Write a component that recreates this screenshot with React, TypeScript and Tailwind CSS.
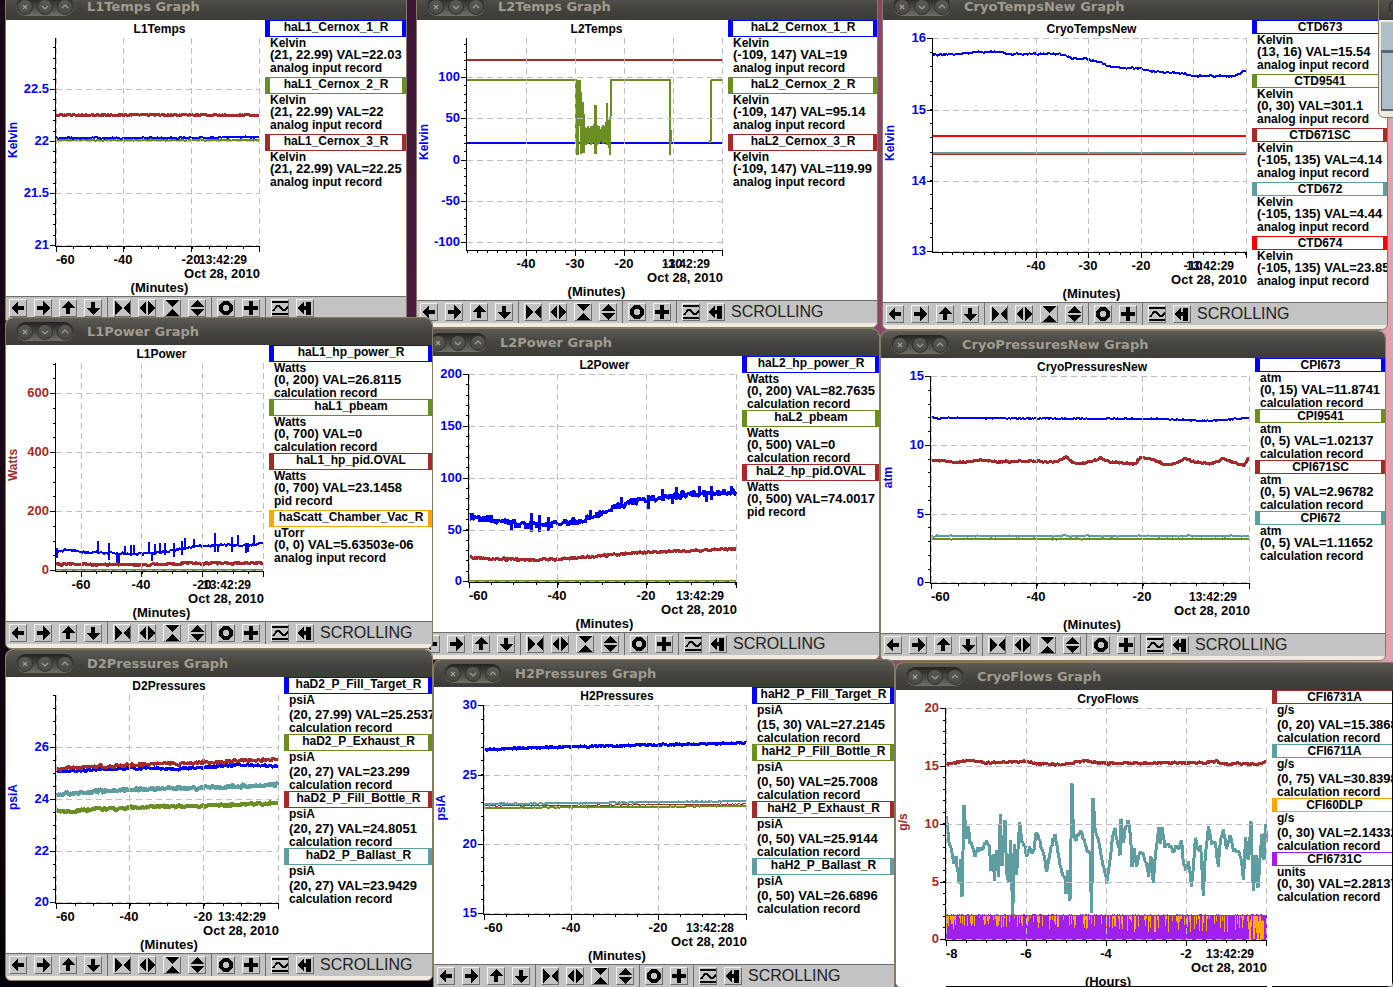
import React from "react";

const BLUE = "#0000ff";
const OLIVE = "#6b8e23";
const BROWN = "#a52a2a";
const TEAL = "#5f9ea0";
const ORANGE = "#ffa500";
const PURPLE = "#a020f0";
const RED = "#ff0000";

const CHART_FONT = "font-['Liberation_Sans',Arial,sans-serif]";

type Pt = [number, number];
type Spike = [number, number, number];
type Series = {
  color: string;
  points: Pt[];
  noise?: number;
  spikes?: Spike[];
  width?: number;
};
type Entry = { name: string; color: string; unit: string; value: string; record: string };
type Plot = {
  x0: number;
  x1: number;
  y0: number;
  y1: number;
  yColor: string;
  yTitle: string;
  xTitle: string;
  y: [string, number][];
  yMinor: number;
  x: [string, number][];
  xMinor: number;
  time: string;
};
type GraphWindow = {
  title: string;
  frame: string;
  origin: Pt;
  size: [number, number];
  plot: Plot;
  series: Series[];
  legend: Entry[];
  status?: boolean;
  cut?: boolean;
};

function random(seed: number) {
  let s = seed;
  return () => {
    s = (s * 16807) % 2147483647;
    return s / 2147483647;
  };
}

function trace({ points, noise = 0, spikes = [] }: Series, seed: number) {
  if (!noise) return points.map((p) => p.join(",")).join(" ");
  const rnd = random(seed);
  const out: string[] = [];
  for (let i = 0; i < points.length - 1; i++) {
    const [ax, ay] = points[i];
    const [bx, by] = points[i + 1];
    for (let x = ax; x < bx; x += 1) {
      const y = ay + ((by - ay) * (x - ax)) / (bx - ax);
      const r = rnd() - 0.5;
      out.push(`${x},${(y + r * noise * 2 * (Math.abs(r) + 0.5)).toFixed(1)}`);
      const spike = spikes.find((s) => s[0] >= x && s[0] < x + 1);
      if (spike) out.push(`${x},${spike[1]}`, `${x},${spike[2]}`, `${x},${y.toFixed(1)}`);
    }
  }
  out.push(points[points.length - 1].join(","));
  return out.join(" ");
}

function steps(from: number, to: number, start: number, step: number) {
  const out: number[] = [];
  for (let v = start; v >= from; v -= step) out.push(v);
  for (let v = start + step; v <= to; v += step) out.push(v);
  return out;
}

const FLOW: Pt[] = ([
  [168, 490], [172, 510], [176, 560], [185, 590], [192, 625], [198, 610], [205, 660], [208, 690], [212, 620],
  [216, 730], [222, 455], [228, 545], [235, 515], [240, 560], [250, 580], [255, 605], [262, 580], [275, 585],
  [290, 560], [298, 575], [303, 640], [310, 600], [313, 675], [320, 580], [325, 665], [331, 470], [336, 635],
  [345, 500], [350, 650], [355, 680], [362, 560], [368, 778], [374, 570], [380, 660], [389, 495], [395, 560],
  [405, 580], [410, 605], [418, 575], [425, 600], [432, 585], [438, 535], [447, 550], [455, 580], [465, 610],
  [470, 650], [480, 590], [490, 550], [495, 535], [500, 570], [510, 630], [518, 655], [525, 670], [528, 715],
  [534, 640], [540, 733], [546, 380], [550, 530], [558, 555], [565, 540], [573, 525], [580, 550], [590, 580],
  [600, 600], [605, 780], [609, 425], [615, 520], [625, 550], [635, 610], [645, 650], [650, 685], [656, 650],
  [662, 600], [667, 545], [675, 520], [680, 550], [690, 600], [693, 490], [700, 570], [706, 520], [714, 495],
  [722, 540], [726, 640], [732, 580], [740, 630], [748, 590], [760, 600], [770, 630], [776, 660], [783, 600],
  [790, 680], [797, 590], [806, 520], [812, 560], [816, 520], [825, 570], [835, 570], [848, 590], [858, 575],
  [866, 580], [875, 560], [880, 620], [888, 645], [895, 620], [904, 690], [910, 640], [916, 550], [925, 590],
  [932, 570], [940, 720], [946, 600], [956, 515], [965, 570], [975, 560], [985, 630], [992, 550], [1000, 520],
  [1010, 580], [1020, 540], [1030, 585], [1045, 590], [1055, 620], [1060, 680], [1067, 550], [1075, 620],
  [1083, 505], [1090, 710], [1098, 600], [1104, 700], [1110, 610], [1116, 540], [1122, 620], [1126, 500],
  [1130, 560],
] as Pt[]).map(([x, y]) => [890 + x / 3, 655 + y / 3] as Pt);

function coolingDips(): Pt[] {
  const rnd = random(77);
  const out: Pt[] = [[467, 80], [576, 80], [576, 143], [577, 80], [577, 155], [578, 80], [578, 155], [579, 80], [580, 126], [580, 80]];
  for (let x = 581; x < 585; x++) out.push([x, 102 + rnd() * 20], [x, 155 - rnd() * 6]);
  for (let x = 585; x < 608; x++) {
    const top = x === 595 || x === 596 ? 105 : x === 607 ? 103 : 125 + rnd() * 6;
    out.push([x, top], [x, x === 595 || x === 596 ? 154 : 141 + rnd() * 4]);
  }
  out.push([608, 120], [609, 140], [610, 155], [611, 80], [670, 80], [670, 155], [671, 130], [671, 143]);
  return out;
}

const flat = (a: number, b: number, y: number): Pt[] => [[a, y], [b, y]];

const analog = "analog input record";
const calc = "calculation record";

const WINDOWS: GraphWindow[] = [
  {
    title: "CryoTempsNew",
    frame: "left-[882px] top-[-8px] w-[506px]",
    origin: [883, 20],
    size: [369, 282],
    status: true,
    plot: {
      x0: 933, x1: 1246, y0: 38, y1: 252, yColor: BLUE, yTitle: "Kelvin", xTitle: "(Minutes)",
      y: [["16", 38], ["15", 110], ["14", 181], ["13", 251]], yMinor: 14.2,
      x: [["-40", 1036], ["-30", 1088], ["-20", 1141], ["-10", 1193]], xMinor: 10.45, time: "13:42:29",
    },
    series: [
      { color: BROWN, points: flat(933, 1246, 154), width: 2 },
      { color: TEAL, points: flat(933, 1246, 153), width: 2 },
      { color: RED, points: flat(933, 1246, 136), width: 2 },
      {
        color: BLUE, noise: 1, width: 2,
        points: [[933, 55], [960, 54], [975, 52], [1000, 52], [1010, 54], [1060, 54], [1072, 58], [1085, 59], [1100, 62], [1108, 66], [1125, 68], [1140, 68], [1155, 72], [1180, 73], [1192, 76], [1235, 76], [1241, 73], [1246, 70]],
      },
    ],
    legend: [
      { name: "CTD673", color: BLUE, unit: "Kelvin", value: "(13, 16) VAL=15.54", record: analog },
      { name: "CTD9541", color: OLIVE, unit: "Kelvin", value: "(0, 30) VAL=301.1", record: analog },
      { name: "CTD671SC", color: BROWN, unit: "Kelvin", value: "(-105, 135) VAL=4.14", record: analog },
      { name: "CTD672", color: TEAL, unit: "Kelvin", value: "(-105, 135) VAL=4.44", record: analog },
      { name: "CTD674", color: RED, unit: "Kelvin", value: "(-105, 135) VAL=23.85", record: analog },
    ],
  },
  {
    title: "L2Temps",
    frame: "left-[416px] top-[-8px] w-[462px]",
    origin: [417, 20],
    size: [311, 280],
    status: true,
    plot: {
      x0: 467, x1: 722, y0: 38, y1: 250, yColor: BLUE, yTitle: "Kelvin", xTitle: "(Minutes)",
      y: [["100", 77], ["50", 118], ["0", 160], ["-50", 201], ["-100", 242]], yMinor: 8.27,
      x: [["-40", 526], ["-30", 575], ["-20", 624], ["-10", 673]], xMinor: 9.8, time: "13:42:29",
    },
    series: [
      { color: BROWN, points: flat(467, 722, 60), width: 2 },
      { color: BLUE, points: flat(467, 722, 143), width: 2 },
      { color: OLIVE, points: coolingDips(), width: 2 },
      { color: OLIVE, points: [[710, 143], [711, 138], [711, 80], [722, 80]], width: 2 },
    ],
    legend: [
      { name: "haL2_Cernox_1_R", color: BLUE, unit: "Kelvin", value: "(-109, 147) VAL=19", record: analog },
      { name: "haL2_Cernox_2_R", color: OLIVE, unit: "Kelvin", value: "(-109, 147) VAL=95.14", record: analog },
      { name: "haL2_Cernox_3_R", color: BROWN, unit: "Kelvin", value: "(-109, 147) VAL=119.99", record: analog },
    ],
  },
  {
    title: "L1Temps",
    frame: "left-[5px] top-[-8px] w-[402px]",
    origin: [6, 20],
    size: [259, 276],
    plot: {
      x0: 56, x1: 259, y0: 38, y1: 246, yColor: BLUE, yTitle: "Kelvin", xTitle: "(Minutes)",
      y: [["22.5", 89], ["22", 141], ["21.5", 193], ["21", 245]], yMinor: 10.4,
      x: [["-60", 56], ["-40", 123], ["-20", 191]], xMinor: 17, time: "13:42:29",
    },
    series: [
      { color: BROWN, points: flat(56, 259, 115), noise: 1, width: 3 },
      { color: OLIVE, points: flat(56, 259, 140), noise: 0.8, width: 2 },
      { color: BLUE, points: [[56, 138], [180, 138], [259, 137]], noise: 0.9, width: 2 },
    ],
    legend: [
      { name: "haL1_Cernox_1_R", color: BLUE, unit: "Kelvin", value: "(21, 22.99) VAL=22.03", record: analog },
      { name: "haL1_Cernox_2_R", color: OLIVE, unit: "Kelvin", value: "(21, 22.99) VAL=22", record: analog },
      { name: "haL1_Cernox_3_R", color: BROWN, unit: "Kelvin", value: "(21, 22.99) VAL=22.25", record: analog },
    ],
  },
  {
    title: "CryoPressuresNew",
    frame: "left-[880px] top-[330px] w-[506px]",
    origin: [881, 358],
    size: [374, 275],
    status: true,
    plot: {
      x0: 931, x1: 1249, y0: 376, y1: 583, yColor: BLUE, yTitle: "atm", xTitle: "(Minutes)",
      y: [["15", 376], ["10", 445], ["5", 514], ["0", 582]], yMinor: 13.75,
      x: [["-60", 931], ["-40", 1036], ["-20", 1142]], xMinor: 26.5, time: "13:42:29",
    },
    series: [
      { color: BLUE, noise: 0.8, width: 2, points: [[931, 418], [1170, 419], [1205, 421], [1249, 418]] },
      {
        color: BROWN, noise: 1, width: 3,
        points: [[931, 461], [943, 460], [955, 463], [980, 460], [1000, 462], [1030, 461], [1055, 462], [1066, 457], [1073, 463], [1085, 463], [1092, 461], [1101, 458], [1110, 462], [1135, 464], [1141, 457], [1155, 460], [1165, 465], [1178, 463], [1185, 458], [1195, 462], [1210, 464], [1223, 459], [1235, 463], [1244, 465], [1249, 458]],
      },
      { color: TEAL, noise: 0.8, width: 2, points: flat(931, 1249, 536) },
      { color: OLIVE, noise: 0.6, width: 2, points: flat(931, 1249, 539) },
    ],
    legend: [
      { name: "CPI673", color: BLUE, unit: "atm", value: "(0, 15) VAL=11.8741", record: calc },
      { name: "CPI9541", color: OLIVE, unit: "atm", value: "(0, 5) VAL=1.02137", record: calc },
      { name: "CPI671SC", color: BROWN, unit: "atm", value: "(0, 5) VAL=2.96782", record: calc },
      { name: "CPI672", color: TEAL, unit: "atm", value: "(0, 5) VAL=1.11652", record: calc },
    ],
  },
  {
    title: "L2Power",
    frame: "left-[418px] top-[328px] w-[462px]",
    origin: [419, 356],
    size: [323, 276],
    status: true,
    plot: {
      x0: 469, x1: 736, y0: 374, y1: 582, yColor: BLUE, yTitle: "", xTitle: "(Minutes)",
      y: [["200", 374], ["150", 426], ["100", 478], ["50", 530], ["0", 581]], yMinor: 10.35,
      x: [["-60", 469], ["-40", 557], ["-20", 646]], xMinor: 22.2, time: "13:42:29",
    },
    series: [
      { color: OLIVE, points: flat(469, 736, 581), width: 2 },
      {
        color: BLUE, noise: 4, width: 3,
        points: [[469, 517], [490, 519], [510, 523], [530, 525], [560, 524], [580, 521], [600, 514], [620, 506], [640, 500], [665, 497], [690, 494], [720, 493], [736, 492]],
        spikes: [[511, 523, 531], [531, 513, 532], [539, 515, 532], [548, 517, 531], [590, 510, 519], [621, 497, 506], [648, 500, 509], [662, 489, 497], [676, 487, 500], [672, 495, 504], [699, 486, 494], [706, 493, 502], [711, 486, 500], [731, 486, 494]],
      },
      {
        color: BROWN, noise: 1.6, width: 3,
        points: [[470, 558], [500, 559], [530, 560], [560, 559], [590, 557], [620, 554], [650, 552], [680, 551], [736, 549]],
      },
    ],
    legend: [
      { name: "haL2_hp_power_R", color: BLUE, unit: "Watts", value: "(0, 200) VAL=82.7635", record: calc },
      { name: "haL2_pbeam", color: OLIVE, unit: "Watts", value: "(0, 500) VAL=0", record: calc },
      { name: "haL2_hp_pid.OVAL", color: BROWN, unit: "Watts", value: "(0, 500) VAL=74.0017", record: "pid record" },
    ],
  },
  {
    title: "CryoFlows",
    frame: "left-[895px] top-[662px] w-[498px] border-r-0 rounded-tr-none",
    origin: [896, 690],
    size: [376, 297],
    cut: true,
    plot: {
      x0: 946, x1: 1266, y0: 708, y1: 940, yColor: BROWN, yTitle: "g/s", xTitle: "(Hours)",
      y: [["20", 708], ["15", 766], ["10", 824], ["5", 882], ["0", 939]], yMinor: 11.55,
      x: [["-8", 946], ["-6", 1026], ["-4", 1106], ["-2", 1186]], xMinor: 20, time: "13:42:29",
    },
    series: [
      {
        color: BROWN, noise: 1.4, width: 3,
        points: [[946, 764], [960, 762], [972, 760], [985, 763], [1025, 761], [1040, 764], [1065, 764], [1085, 761], [1100, 763], [1205, 763], [1215, 761], [1225, 764], [1260, 764], [1266, 762]],
      },
      { color: TEAL, noise: 2.5, width: 3, points: FLOW },
    ],
    legend: [
      { name: "CFI6731A", color: BROWN, unit: "g/s", value: "(0, 20) VAL=15.3868", record: calc },
      { name: "CFI6711A", color: TEAL, unit: "g/s", value: "(0, 75) VAL=30.8398", record: calc },
      { name: "CFI60DLP", color: ORANGE, unit: "g/s", value: "(0, 30) VAL=2.14332", record: calc },
      { name: "CFI6731C", color: PURPLE, unit: "units", value: "(0, 30) VAL=2.28137", record: calc },
    ],
  },
  {
    title: "D2Pressures",
    frame: "left-[5px] top-[649px] w-[428px]",
    origin: [6, 677],
    size: [278, 276],
    status: true,
    plot: {
      x0: 56, x1: 278, y0: 695, y1: 903, yColor: BLUE, yTitle: "psiA", xTitle: "(Minutes)",
      y: [["26", 747], ["24", 799], ["22", 851], ["20", 902]], yMinor: 12.95,
      x: [["-60", 56], ["-40", 129], ["-20", 203]], xMinor: 18.5, time: "13:42:29",
    },
    series: [
      { color: BLUE, noise: 1.8, width: 3, points: [[57, 772], [90, 770], [130, 768], [180, 769], [210, 767], [240, 765], [278, 766]] },
      { color: BROWN, noise: 2.2, width: 3, points: [[57, 769], [90, 767], [130, 765], [180, 763], [220, 762], [278, 759]] },
      { color: TEAL, noise: 2.4, width: 4, points: [[57, 795], [100, 791], [150, 789], [200, 788], [278, 785]] },
      { color: OLIVE, noise: 1.8, width: 4, points: [[57, 812], [100, 809], [150, 807], [200, 806], [278, 803]] },
    ],
    legend: [
      { name: "haD2_P_Fill_Target_R", color: BLUE, unit: "psiA", value: "(20, 27.99) VAL=25.2537", record: calc },
      { name: "haD2_P_Exhaust_R", color: OLIVE, unit: "psiA", value: "(20, 27) VAL=23.299", record: calc },
      { name: "haD2_P_Fill_Bottle_R", color: BROWN, unit: "psiA", value: "(20, 27) VAL=24.8051", record: calc },
      { name: "haD2_P_Ballast_R", color: TEAL, unit: "psiA", value: "(20, 27) VAL=23.9429", record: calc },
    ],
  },
  {
    title: "L1Power",
    frame: "left-[5px] top-[317px] w-[428px]",
    origin: [6, 345],
    size: [263, 276],
    status: true,
    plot: {
      x0: 56, x1: 263, y0: 363, y1: 571, yColor: BROWN, yTitle: "Watts", xTitle: "(Minutes)",
      y: [["600", 393], ["400", 452], ["200", 511], ["0", 570]], yMinor: 14.75,
      x: [["-60", 81], ["-40", 141], ["-20", 202]], xMinor: 15.15, time: "13:42:29",
    },
    series: [
      { color: OLIVE, points: flat(56, 263, 570), width: 2 },
      { color: BROWN, noise: 1.6, width: 3, points: [[56, 564], [150, 565], [190, 563], [263, 563]] },
      {
        color: BLUE, noise: 1.4, width: 2,
        points: [[56, 551], [70, 550], [80, 552], [110, 553], [140, 554], [165, 552], [185, 548], [200, 546], [225, 545], [250, 545], [263, 543]],
        spikes: [[57, 548, 558], [98, 541, 553], [109, 543, 560], [117, 553, 562], [119, 553, 563], [125, 546, 554], [131, 545, 556], [134, 545, 554], [149, 542, 554], [152, 554, 561], [155, 544, 555], [160, 543, 554], [165, 543, 555], [174, 543, 557], [182, 541, 555], [185, 538, 548], [194, 539, 548], [215, 533, 552], [218, 544, 552], [232, 537, 552], [238, 535, 546], [246, 543, 553], [248, 543, 552], [254, 535, 545]],
      },
    ],
    legend: [
      { name: "haL1_hp_power_R", color: BLUE, unit: "Watts", value: "(0, 200) VAL=26.8115", record: calc },
      { name: "haL1_pbeam", color: OLIVE, unit: "Watts", value: "(0, 700) VAL=0", record: calc },
      { name: "haL1_hp_pid.OVAL", color: BROWN, unit: "Watts", value: "(0, 700) VAL=23.1458", record: "pid record" },
      { name: "haScatt_Chamber_Vac_R", color: ORANGE, unit: "uTorr", value: "(0, 0) VAL=5.63503e-06", record: analog },
    ],
  },
  {
    title: "H2Pressures",
    frame: "left-[433px] top-[659px] w-[462px]",
    origin: [434, 687],
    size: [318, 277],
    status: true,
    plot: {
      x0: 484, x1: 746, y0: 705, y1: 914, yColor: BLUE, yTitle: "psiA", xTitle: "(Minutes)",
      y: [["30", 705], ["25", 775], ["20", 844], ["15", 913]], yMinor: 13.85,
      x: [["-60", 484], ["-40", 571], ["-20", 658]], xMinor: 21.8, time: "13:42:28",
    },
    series: [
      { color: OLIVE, noise: 0.4, width: 2, points: [[484, 808], [746, 806]] },
      { color: BROWN, noise: 0.4, width: 1, points: [[484, 806], [746, 804]] },
      { color: TEAL, noise: 0.6, width: 2, points: [[484, 804], [590, 803], [746, 801]] },
      { color: BLUE, noise: 1.2, width: 3, points: [[484, 750], [520, 748], [600, 746], [700, 744], [746, 743]] },
    ],
    legend: [
      { name: "haH2_P_Fill_Target_R", color: BLUE, unit: "psiA", value: "(15, 30) VAL=27.2145", record: calc },
      { name: "haH2_P_Fill_Bottle_R", color: OLIVE, unit: "psiA", value: "(0, 50) VAL=25.7008", record: calc },
      { name: "haH2_P_Exhaust_R", color: BROWN, unit: "psiA", value: "(0, 50) VAL=25.9144", record: calc },
      { name: "haH2_P_Ballast_R", color: TEAL, unit: "psiA", value: "(0, 50) VAL=26.6896", record: calc },
    ],
  },
];

function FlowBand({ x0, x1 }: { x0: number; x1: number }) {
  const rnd = random(4211);
  const orange: string[] = [];
  const bumps: string[] = [];
  for (let x = x0; x < x1; x++) {
    const depth = x > 1120 ? 15 : 11;
    if (rnd() < 0.42) orange.push(`M${x + 0.5} 916V${Math.round(918 + rnd() * depth)}`);
    if (x > 1244 && rnd() < 0.4) orange.push(`M${x + 0.5} ${Math.round(919 + rnd() * 3)}V939`);
    if (rnd() < 0.25) bumps.push(`M${x + 0.5} 914V916`);
  }
  return (
    <g shapeRendering="crispEdges">
      <rect x={x0} y={915} width={x1 - x0 + 1} height={25} fill={PURPLE} />
      <path d={bumps.join("")} stroke={PURPLE} />
      <path d={orange.join("")} stroke={ORANGE} />
    </g>
  );
}

function Chart({ win }: { win: GraphWindow }) {
  const { plot: p, series, origin, size } = win;
  const cx = (p.x0 + p.x1) / 2 + 2;
  const majors = [...p.x.map((t) => t[1]), p.x1];
  return (
    <svg
      width={size[0]}
      height={size[1]}
      viewBox={`${origin[0]} ${origin[1]} ${size[0]} ${size[1]}`}
      role="img"
      aria-label={win.title}
      className={`shrink-0 ${CHART_FONT} font-bold`}
    >
      <g shapeRendering="crispEdges" fill="none" strokeLinejoin="bevel">
        {series.map((s, i) => (
          <polyline key={i} points={trace(s, 1013 * (i + 3) + p.x1)} stroke={s.color} strokeWidth={s.width ?? 1} />
        ))}
      </g>
      {win.cut && <FlowBand x0={p.x0} x1={p.x1} />}
      <g shapeRendering="crispEdges" stroke="#bebebe" strokeDasharray="6 4" fill="none">
        {p.y.map(([, y]) => (
          <line key={y} x1={p.x0} x2={p.x1} y1={y + 0.5} y2={y + 0.5} />
        ))}
        {majors.map((x) => (
          <line key={x} x1={x + 0.5} x2={x + 0.5} y1={p.y0} y2={p.y1} />
        ))}
      </g>
      <g shapeRendering="crispEdges" stroke="#000000" fill="none">
        <path d={`M${p.x0 - 0.5} ${p.y0}V${p.y1 + 1}M${p.x0} ${p.y1 + 0.5}H${p.x1 + 1}`} />
        {p.y.map(([, y]) => (
          <path key={y} d={`M${p.x0 - 6} ${y + 0.5}h6`} />
        ))}
        {steps(p.y0, p.y1, p.y[0][1], p.yMinor).map((y) => (
          <path key={y} d={`M${p.x0 - 3} ${Math.round(y) + 0.5}h3`} />
        ))}
        {majors.map((x) => (
          <path key={x} d={`M${x + 0.5} ${p.y1}v6`} />
        ))}
        {steps(p.x0, p.x1, p.x[0][1], p.xMinor).map((x) => (
          <path key={x} d={`M${Math.round(x) + 0.5} ${p.y1}v3`} />
        ))}
        {win.cut && <path d={`M${p.x0} ${origin[1] + size[1] - 0.5}H${p.x1 + 1}`} />}
      </g>
      <text x={cx} y={origin[1] + 13} textAnchor="middle" className="text-[12px]">
        {win.title}
      </text>
      <g className="text-[13px]">
        <g fill={p.yColor} textAnchor="end">
          {p.y.map(([label, y]) => (
            <text key={y} x={p.x0 - 7} y={y + 4}>
              {label}
            </text>
          ))}
        </g>
        {p.x.map(([label, x]) => (
          <text key={x} x={x} y={p.y1 + 18} textAnchor={x - p.x0 < 5 ? "start" : "middle"}>
            {label}
          </text>
        ))}
        <text x={p.x1 + 1} y={p.y1 + 32} textAnchor="end">
          Oct 28, 2010
        </text>
        <text x={cx} y={p.y1 + 46} textAnchor="middle">
          {p.xTitle}
        </text>
      </g>
      <g className="text-[12px]">
        <text x={p.x1 - 36} y={p.y1 + 18} textAnchor="middle">
          {p.time}
        </text>
        {p.yTitle && (
          <text
            transform={`translate(${origin[0] + 11} ${(p.y0 + p.y1) / 2 - 2}) rotate(-90)`}
            textAnchor="middle"
            fill={p.yColor}
          >
            {p.yTitle}
          </text>
        )}
      </g>
    </svg>
  );
}

const hasDescender = (s: string) => /[gjpqy_(),]/.test(s);

function Line({ text, size = "text-[12px]" }: { text: string; size?: string }) {
  return <p className={`${size} leading-[11px] ${hasDescender(text) ? "pb-[3px]" : ""}`}>{text}</p>;
}

function Legend({ entries, cut }: { entries: Entry[]; cut?: boolean }) {
  return (
    <ul
      className={`min-w-0 flex-1 overflow-hidden font-bold whitespace-nowrap text-black ${CHART_FONT} ${
        cut ? "border-r border-b border-black" : ""
      }`}
    >
      {entries.map((e) => (
        <li key={e.name}>
          <h3
            className={`border-y border-l-[5px] pt-px text-center text-[12px] leading-[11px] ${
              hasDescender(e.name) ? "pb-[3px]" : ""
            } ${cut ? "" : "border-r-4"}`}
            style={{ borderColor: e.color }}
          >
            {e.name}
          </h3>
          <div className="pt-px pl-[5px]">
            <Line text={e.unit} />
            <Line text={e.value} size="text-[13px]" />
            <Line text={e.record} />
          </div>
        </li>
      ))}
    </ul>
  );
}

const GROUPS: [string, React.ReactNode][][] = [
  [
    ["Scroll left", <path d="M1 8 8 1v5h6v4H8v5z" />],
    ["Scroll right", <path d="M15 8 8 1v5H2v4h6v5z" />],
    ["Scroll up", <path d="M8 1 1 8h5v6h4V8h5z" />],
    ["Scroll down", <path d="M8 15 1 8h5V2h4v6h5z" />],
  ],
  [
    ["Compress horizontally", <path d="M1 1l7 7-7 7zM16 1 9 8l7 7z" />],
    ["Expand horizontally", <path d="M7 1v14L0 8zM9 1v14l7-7z" />],
    ["Compress vertically", <path d="M1 0h14L8 7zM1 16h14L8 9z" />],
    ["Expand vertically", <path d="M8 0l7 7H1zM8 16l7-7H1z" />],
  ],
  [
    ["Center", <circle cx="8" cy="8" r="5" fill="none" stroke="#000000" strokeWidth="4" />],
    ["Zoom", <path d="M6 1h4v5h5v4h-5v5H6v-5H1V6h5z" />],
  ],
  [
    [
      "Auto scale",
      <path d="M0 2h16M0 14h16M1 11l4-5h2l4 4h2l3-3" fill="none" stroke="#000000" strokeWidth="2" />,
    ],
    ["Latest", <path d="M0 8l7-6v4h2V2h5v13H9v-5H7v4z" />],
  ],
];

function Toolbar({ status }: { status?: boolean }) {
  return (
    <div role="toolbar" className="flex h-[23px] items-stretch overflow-hidden border-t border-[#6e6e6e] bg-[#c3c3c3] pl-[3px]">
      {GROUPS.map((group, g) => (
        <div
          key={g}
          className={`flex shrink-0 items-start gap-[7px] pt-[2px] ${
            g < 3 ? "mr-[5px] border-r border-[#6e6e6e] pr-[5px]" : "pr-[6px]"
          }`}
        >
          {group.map(([label, icon]) => (
            <button
              key={label}
              type="button"
              aria-label={label}
              className="size-[18px] border border-t-[#f4f4f4] border-r-[#6e6e6e] border-b-[#6e6e6e] border-l-[#f4f4f4]"
            >
              <svg width="16" height="16" viewBox="0 0 16 16" shapeRendering="crispEdges">
                {icon}
              </svg>
            </button>
          ))}
        </div>
      ))}
      {status && (
        <span className={`${CHART_FONT} text-[16px] leading-[21px] font-normal text-[#222222]`}>SCROLLING</span>
      )}
    </div>
  );
}

const CONTROLS: [string, string][] = [
  ["Close", "M6 6l4 4M10 6l-4 4"],
  ["Minimize", "M5 7l3 3 3-3"],
  ["Maximize", "M5 9l3-3 3 3"],
];

function TitleBar({ title }: { title: string }) {
  return (
    <header className="flex h-[27px] items-center bg-linear-to-b from-[#5d5b54] via-[#45443f] to-[#3c3b37] pl-[10px]">
      <div className="mr-[13px] flex h-[19px] w-[58px] items-center justify-center gap-1 rounded-full bg-linear-to-b from-[#24231f] to-[#706f69]">
        {CONTROLS.map(([label, d]) => (
          <button
            key={label}
            type="button"
            aria-label={label}
            className="size-4 rounded-full border border-[#33322e] bg-linear-to-b from-[#5a5953] to-[#4a4943]"
          >
            <svg width="14" height="14" viewBox="1 1 14 14" fill="none" stroke="#a09f98" strokeWidth="1.2">
              <path d={d} />
            </svg>
          </button>
        ))}
      </div>
      <h2 className="font-['DejaVu_Sans',sans-serif] text-[13px] leading-4 font-bold whitespace-nowrap text-[#a09c90]">
        {title} Graph
      </h2>
    </header>
  );
}

function Win({ win }: { win: GraphWindow }) {
  return (
    <section
      className={`absolute ${win.frame} overflow-hidden rounded-t-lg rounded-b-md border border-[#867a62] bg-[#efebe2]`}
    >
      <TitleBar title={win.title} />
      <div className="flex overflow-hidden bg-white">
        <Chart win={win} />
        <Legend entries={win.legend} cut={win.cut} />
      </div>
      {!win.cut && (
        <>
          <Toolbar status={win.status} />
          <div className="h-[4px]" />
        </>
      )}
    </section>
  );
}

export default function App() {
  return (
    <main className="relative h-screen w-full overflow-hidden bg-linear-to-r from-[#1a0718] via-[#8a4668] via-63% to-[#e2a0b0]">
      <div className="absolute top-0 bottom-0 left-[406px] w-[12px] bg-linear-to-b from-[#3c1535] to-[#6a2c54]" />
      <div className="absolute bottom-0 left-0 h-[500px] w-[440px] bg-linear-to-b from-transparent to-[#06020a]" />
      {WINDOWS.map((w) => (
        <Win key={w.title} win={w} />
      ))}
      <section className="absolute top-[-8px] left-[1378px] w-[40px] overflow-hidden rounded-t-lg rounded-b-md border border-[#867a62] bg-[#efebe2]">
        <div className="flex h-[27px] items-center bg-linear-to-b from-[#5d5b54] to-[#3c3b37] pl-[10px]">
          <div className="size-4 rounded-full border border-[#24231f] bg-[#4a4943]" />
        </div>
        <div className="pt-[2px] pl-[2px]">
          <div className="h-[28px] bg-[#aebfc8]" />
          <div className="h-[3px] bg-[#5c666e]" />
          <div className="h-[58px] border-b-2 border-l border-[#5c666e] bg-[#aebfc8]" />
          <div className="h-[6px]" />
        </div>
      </section>
    </main>
  );
}
